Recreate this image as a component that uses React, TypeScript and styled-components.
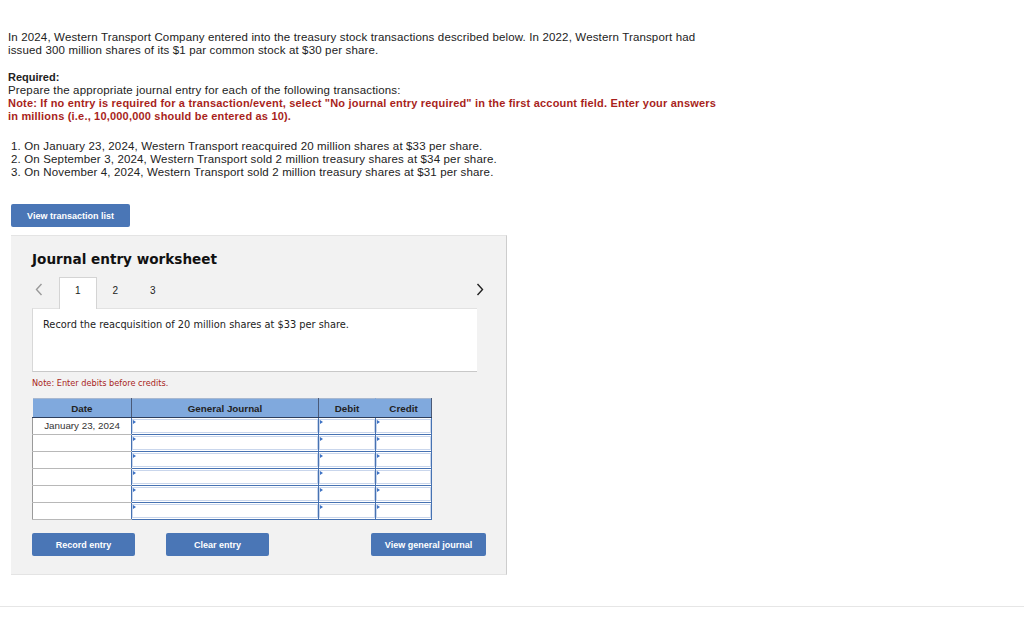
import React from "react"
import styled, { createGlobalStyle } from "styled-components"

const GlobalStyle = createGlobalStyle`
  html, body {
    margin: 0;
    padding: 0;
    background: #fff;
  }
  body {
    font-family: "Liberation Sans", Arial, sans-serif;
    color: #222;
  }
`

const transactions = [
  "On January 23, 2024, Western Transport reacquired 20 million shares at $33 per share.",
  "On September 3, 2024, Western Transport sold 2 million treasury shares at $34 per share.",
  "On November 4, 2024, Western Transport sold 2 million treasury shares at $31 per share.",
]

const rows = ["January 23, 2024", "", "", "", "", ""]

const Arrow: React.FC<{ dir: "left" | "right" }> = ({ dir }) => (
  <svg width="8" height="13" viewBox="0 0 8 13">
    <path
      d={dir === "left" ? "M6.5 1 L1.5 6.5 L6.5 12" : "M1.5 1 L6.5 6.5 L1.5 12"}
      fill="none"
      stroke={dir === "left" ? "#9a9a9a" : "#222"}
      strokeWidth="1.4"
    />
  </svg>
)

export default function App() {
  return (
    <S.Page>
      <GlobalStyle />
      <S.Intro>
        <S.Para>
          In 2024, Western Transport Company entered into the treasury stock transactions described below. In 2022,
          Western Transport had
          <br />
          issued 300 million shares of its $1 par common stock at $30 per share.
        </S.Para>
        <S.Para>
          <strong>Required:</strong>
          <br />
          Prepare the appropriate journal entry for each of the following transactions:
          <br />
          <S.RedNote>
            Note: If no entry is required for a transaction/event, select "No journal entry required" in the first
            account field. Enter your answers
            <br />
            in millions (i.e., 10,000,000 should be entered as 10).
          </S.RedNote>
        </S.Para>
        <S.List>
          {transactions.map((t, i) => (
            <li key={i}>
              {i + 1}. {t}
            </li>
          ))}
        </S.List>
      </S.Intro>

      <S.TopAction>
        <S.BlueButton $width={119}>View transaction list</S.BlueButton>
      </S.TopAction>

      <S.Panel>
        <S.Title>Journal entry worksheet</S.Title>
        <S.TabBar>
          <S.ArrowSlot $side="left">
            <Arrow dir="left" />
          </S.ArrowSlot>
          <S.Tab $active>1</S.Tab>
          <S.Tab>2</S.Tab>
          <S.Tab>3</S.Tab>
          <S.Spacer />
          <S.ArrowSlot $side="right">
            <Arrow dir="right" />
          </S.ArrowSlot>
        </S.TabBar>
        <S.Prompt>Record the reacquisition of 20 million shares at $33 per share.</S.Prompt>
        <S.SmallNote>Note: Enter debits before credits.</S.SmallNote>

        <S.Table>
          <thead>
            <tr>
              <S.Th $w={99}>Date</S.Th>
              <S.Th $w={187}>General Journal</S.Th>
              <S.Th $w={57} $noRight>
                Debit
              </S.Th>
              <S.Th $w={56}>Credit</S.Th>
            </tr>
          </thead>
          <tbody>
            {rows.map((d, i) => (
              <S.Row key={i}>
                <S.DateCell>{d}</S.DateCell>
                {[0, 1, 2].map((c) => (
                  <S.InputCell key={c}>
                    <S.InputBox />
                  </S.InputCell>
                ))}
              </S.Row>
            ))}
          </tbody>
        </S.Table>

        <S.ButtonRow>
          <S.BlueButton $width={103}>Record entry</S.BlueButton>
          <S.BlueButton $width={103}>Clear entry</S.BlueButton>
          <S.Spacer />
          <S.BlueButton $width={115}>View general journal</S.BlueButton>
        </S.ButtonRow>
      </S.Panel>

      <S.Footer />
    </S.Page>
  )
}

const S = {
  Page: styled.div`
    width: 1024px;
    height: 619px;
    overflow: hidden;
    padding-top: 31px;
    box-sizing: border-box;
  `,
  Intro: styled.div`
    padding-left: 8px;
    font-size: 11.5px;
    line-height: 13px;
    letter-spacing: 0.15px;
    color: #222;
  `,
  Para: styled.p`
    margin: 0 0 14px;
    strong {
      font-weight: 700;
      font-size: 11px;
      letter-spacing: 0;
    }
  `,
  RedNote: styled.span`
    color: #a81f1c;
    font-weight: 700;
    font-size: 11px;
    letter-spacing: 0.19px;
  `,
  List: styled.ol`
    list-style: none;
    margin: 17px 0 0;
    padding-left: 3px;
  `,
  TopAction: styled.div`
    padding: 25px 0 0 11px;
    display: flex;
  `,
  BlueButton: styled.button<{ $width: number }>`
    width: ${({ $width }) => $width}px;
    height: 23px;
    border: none;
    border-radius: 2px;
    background: #4a76b6;
    color: #fff;
    font-family: "Liberation Sans", Arial, sans-serif;
    font-weight: 700;
    font-size: 9px;
    padding: 0;
    flex-shrink: 0;
  `,
  Panel: styled.div`
    margin: 8px 0 0 11px;
    width: 496px;
    box-sizing: border-box;
    background: #f2f2f2;
    border-top: 1px solid #e4e4e4;
    border-right: 1px solid #cdcdcd;
    border-bottom: 1px solid #e4e4e4;
    padding: 14px 29px 18px 21px;
  `,
  Title: styled.h2`
    margin: 0;
    font-family: "DejaVu Sans", Verdana, sans-serif;
    font-size: 13.6px;
    font-weight: 700;
    color: #111;
    line-height: 18px;
  `,
  TabBar: styled.div`
    display: flex;
    align-items: stretch;
    height: 31px;
    margin: 9px -16px 0 0;
  `,
  ArrowSlot: styled.div<{ $side: "left" | "right" }>`
    width: 27px;
    box-sizing: border-box;
    display: flex;
    align-items: center;
    justify-content: center;
    padding-bottom: 7px;
    padding-right: ${({ $side }) => ($side === "left" ? "14px" : "0")};
  `,
  Tab: styled.div<{ $active?: boolean }>`
    width: 37.5px;
    box-sizing: border-box;
    display: flex;
    align-items: center;
    justify-content: center;
    padding-bottom: 7px;
    font-family: "Liberation Sans", Arial, sans-serif;
    font-size: 10px;
    color: #222;
    background: ${({ $active }) => ($active ? "#fff" : "transparent")};
    border: 1px solid ${({ $active }) => ($active ? "#d4d4d4" : "transparent")};
    border-bottom: none;
    margin-bottom: -1px;
    position: relative;
  `,
  Spacer: styled.div`
    flex: 1;
  `,
  Prompt: styled.div`
    height: 64px;
    box-sizing: border-box;
    background: #fff;
    border-top: 1px solid #e2e2e2;
    border-left: 1px solid #d8d8d8;
    border-bottom: 1px solid #c8c8c8;
    padding: 10px 10px;
    font-family: "DejaVu Sans", Verdana, sans-serif;
    font-size: 9.8px;
    color: #222;
  `,
  SmallNote: styled.div`
    margin-top: 6px;
    font-family: "DejaVu Sans", Verdana, sans-serif;
    font-size: 8.2px;
    color: #a81f1c;
    line-height: 10px;
  `,
  Table: styled.table`
    margin-top: 10px;
    border-collapse: collapse;
    table-layout: fixed;
    width: 399px;
  `,
  Th: styled.th<{ $w: number; $noRight?: boolean }>`
    width: ${({ $w }) => $w}px;
    height: 19px;
    padding: 0;
    box-sizing: border-box;
    background: #80a9dd;
    font-size: 9.8px;
    font-weight: 700;
    color: #222;
    border-bottom: 1px solid #2d3f5e;
    border-right: 1px solid ${({ $noRight }) => ($noRight ? "#80a9dd" : "#4a5a78")};
    border-top: 1px solid #a8b8d0;
  `,
  Row: styled.tr`
    height: 17px;
  `,
  DateCell: styled.td`
    height: 17px;
    padding: 0;
    box-sizing: border-box;
    background: #fff;
    border-left: 1px solid #9a9a9a;
    border-bottom: 1px solid #b8b8b8;
    font-size: 9.8px;
    color: #333;
    text-align: center;
    line-height: 14px;
  `,
  InputCell: styled.td`
    height: 17px;
    padding: 0;
    box-sizing: border-box;
    background: #fff;
    border: 1px solid #4672b2;
  `,
  InputBox: styled.div`
    position: relative;
    height: 14px;
    box-shadow: inset 0 0 0 1px #c9d6ec;
    &::before {
      content: "";
      position: absolute;
      left: 1px;
      top: 1px;
      border-left: 3px solid #3d72c4;
      border-top: 2px solid transparent;
      border-bottom: 2px solid transparent;
    }
  `,
  ButtonRow: styled.div`
    display: flex;
    gap: 31px;
    margin-top: 13px;
    width: 454px;
  `,
  Footer: styled.div`
    margin-top: 31px;
    border-top: 1px solid #e6e6e6;
  `,
}
